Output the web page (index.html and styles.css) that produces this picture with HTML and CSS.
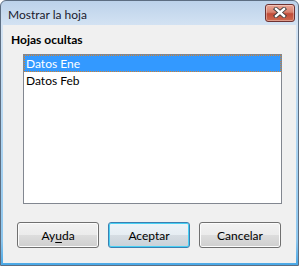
FILE: index.html
```html
<!DOCTYPE html>
<html lang="es">
<head>
    <meta charset="UTF-8">
    <title>Mostrar la hoja</title>
    <link rel="stylesheet" href="styles.css">
</head>
<body>
    <div class="window">
        <div class="titlebar">
            <span class="title">Mostrar la hoja</span>
            <button class="close-btn" aria-label="Cerrar">
                <svg width="14" height="11" viewBox="0 0 14 11">
                    <path d="M3 2 L11 9 M11 2 L3 9" stroke="#3b3b3b" stroke-width="4.2" stroke-linecap="square"/>
                    <path d="M3 2 L11 9 M11 2 L3 9" stroke="#ffffff" stroke-width="2.4" stroke-linecap="square"/>
                </svg>
            </button>
        </div>

        <div class="client">
            <div class="section-label">Hojas ocultas</div>
            <ul class="sheet-list">
                <li class="selected">Datos Ene</li>
                <li>Datos Feb</li>
            </ul>

            <div class="buttons">
                <button class="btn">Ay<u>u</u>da</button>
                <button class="btn btn-default">Aceptar</button>
                <button class="btn">Cancelar</button>
            </div>
        </div>
    </div>
</body>
</html>
```

FILE: styles.css
```css
* {
    margin: 0;
    padding: 0;
    box-sizing: border-box;
}

body {
    font-family: 'Lato', 'Open Sans', sans-serif;
    font-size: 12px;
    background: #ffffff;
    color: #000000;
}

.window {
    width: 299px;
    height: 266px;
    display: flex;
    flex-direction: column;
    border: 1px solid #5d6e82;
    border-radius: 6px 6px 0 0;
    padding: 0 2px 2px 2px;
    background: linear-gradient(#bcd2ea, #d4e3f3 25px, #8cc6ee 240px, #4aa8e6);
}

.titlebar {
    height: 24px;
    display: flex;
    align-items: center;
    justify-content: space-between;
    padding-left: 5px;
}

.title {
    color: #1a1a2e;
    font-size: 12px;
    margin-top: 2px;
}

.close-btn {
    width: 30px;
    height: 18px;
    margin-top: -1px;
    margin-right: 1px;
    display: flex;
    align-items: center;
    justify-content: center;
    border: 1px solid #6e3232;
    border-radius: 3px;
    background: linear-gradient(#eaa696, #d8826f 45%, #c04b38 55%, #cf6a50);
    box-shadow: inset 0 0 0 1px rgba(255, 255, 255, 0.35);
}

.client {
    flex: 1;
    display: flex;
    flex-direction: column;
    background: #f0f0f0;
    padding: 7px 8px 0 8px;
}

.section-label {
    font-weight: bold;
    line-height: 16px;
}

.sheet-list {
    list-style: none;
    margin: 6px 6px 0 12px;
    height: 150px;
    background: #ffffff;
    border: 1px solid #828790;
}

.sheet-list li {
    height: 17px;
    line-height: 17px;
    padding-left: 2px;
}

.sheet-list li.selected {
    background: #3399ff;
    color: #ffffff;
    outline: 1px dotted #d4822c;
    outline-offset: -1px;
}

.buttons {
    display: flex;
    gap: 9px;
    margin-top: 18px;
    padding-left: 6px;
}

.btn {
    width: 82px;
    height: 26px;
    font-family: inherit;
    font-size: 12px;
    color: #000000;
    border: 1px solid #707070;
    border-radius: 3px;
    background: linear-gradient(#f2f2f2, #ebebeb 50%, #dddddd 50%, #cfcfcf);
    box-shadow: inset 0 0 0 1px #fcfcfc;
}

.btn u {
    text-underline-offset: 2px;
}

.btn-default {
    border-color: #3c7fb1;
    box-shadow: inset 0 0 0 1px #48d0f4;
    background: linear-gradient(#eef4f8, #e6edf2 50%, #d6dde3 50%, #c9d1d8);
}
```
